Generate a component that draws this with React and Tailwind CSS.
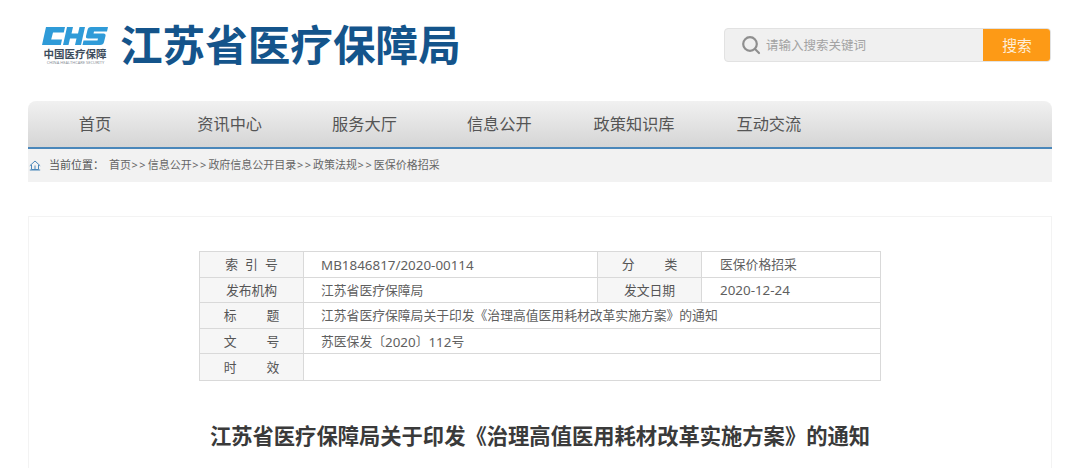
import React from "react";

const font = { fontFamily: '"Noto Sans","Noto Sans CJK SC",sans-serif' };

function Logo() {
  return (
    <div className="flex w-[66px] flex-col items-center">
      <svg width="66" height="18" viewBox="0 0 66 18" className="block">
        <g fill="#2f9bd8">
          <path d="M4 0H23L21.8 5.5H11L9.2 12.5H20L18.8 18H0Z" />
          <path d="M25 0H31L29.5 6.5H36L37.5 0H43L39 18H33L34.5 11.5H28L26.5 18H21Z" />
          <path d="M47 0H66L65 4.5H52L51.5 6.5H61.5Q64 6.5 63.5 9L62 15Q61.5 18 58 18H40.5L41.5 13.5H55.5L56 11.5H46Q43.5 11.5 44 9L45.5 3Q46 0 49 0Z" />
        </g>
      </svg>
      <div className="mt-[3px] text-[10.5px] leading-[12px] font-bold whitespace-nowrap text-[#3d4c5c]">中国医疗保障</div>
      <div className="origin-top scale-50 text-[8px] leading-[8px] whitespace-nowrap text-[#8a929a]">CHINA HEALTHCARE SECURITY</div>
    </div>
  );
}

const labelCls = "flex items-center justify-center bg-[#f6f6f6] border-r border-[#d9d9d9] pt-px text-[12.8px] text-[#555]";
const valueCls = "flex items-center pl-[17px] pt-px text-[12.8px] text-[#5f5f5f] whitespace-nowrap";
const latinCls = "text-[13.4px]";

function Row({ children, last }) {
  return (
    <div className={"flex h-[25.6px] " + (last ? "" : "border-b border-[#d9d9d9]")}>{children}</div>
  );
}

function Sep() {
  return <span className="w-[16.7px] text-center tracking-[1.5px]">&gt;&gt;</span>;
}

export default function App() {
  const nav = ["首页", "资讯中心", "服务大厅", "信息公开", "政策知识库", "互动交流"];
  return (
    <div style={font} className="h-[468px] w-[1080px] overflow-hidden bg-white">
      <header className="flex h-[101px] items-start pr-[29px] pl-[42px]">
        <div className="mt-[27px]"><Logo /></div>
        <h1 className="mt-[13px] ml-[12px] text-[42.6px] leading-[62px] font-bold whitespace-nowrap text-[#14548b]">江苏省医疗保障局</h1>
        <div className="mt-[28px] ml-auto flex h-[34px] w-[327px] overflow-hidden rounded-[4px] border border-[#e2e2e2] bg-[#f0f0f0]">
          <div className="flex flex-1 items-center pl-[16px]">
            <svg width="20" height="20" viewBox="0 0 20 20" fill="none" stroke="#8f8f8f" strokeWidth="2.2" strokeLinecap="round">
              <circle cx="9" cy="9" r="6.8" />
              <path d="M14 14l4 4" />
            </svg>
            <span className="ml-[5px] pt-[2px] text-[12.5px] text-[#a3a3a3]">请输入搜索关键词</span>
          </div>
          <div className="-my-px -mr-px flex w-[68px] items-center justify-center bg-[#fd9a16] text-[14.8px] text-[#fdeeda]">搜索</div>
        </div>
      </header>

      <nav className="mx-[28px] flex h-[48px] items-center rounded-t-[8px] border-b-2 border-[#4a87ba] bg-gradient-to-b from-[#f1f1f1] to-[#d5d5d5]">
        {nav.map((n) => (
          <div key={n} className="w-[134.8px] pr-px text-center text-[16.2px] whitespace-nowrap text-[#555]">{n}</div>
        ))}
      </nav>

      <div className="mx-[28px] flex h-[33px] items-center bg-[#f2f2f2] text-[11px] whitespace-nowrap text-[#555]">
        <svg width="12" height="11" viewBox="0 0 12 11" fill="none" stroke="#4a87ba" strokeWidth="1" className="mr-[8px] ml-[1px]">
          <path d="M.8 5.8 6 1l5.2 4.8M2.5 5v4.5h7V5M6 5.5v4M.8 10h10.4" />
        </svg>
        <span className="w-[60px]">当前位置：</span>
        <div className="flex text-[#666]">
          <span>首页</span><Sep /><span>信息公开</span><Sep /><span>政府信息公开目录</span><Sep /><span>政策法规</span><Sep /><span>医保价格招采</span>
        </div>
      </div>

      <main className="mx-[28px] mt-[34px] h-[300px] border border-[#f3f3f3] pt-[34px]">
        <div className="ml-[170px] w-[682px] border border-[#d9d9d9]">
          <Row>
            <div className={labelCls + " w-[104px] gap-[7px]"}><span>索</span><span>引</span><span>号</span></div>
            <div className={valueCls + " w-[293px]"}><span className={latinCls}>MB1846817/2020-00114</span></div>
            <div className={labelCls + " w-[105px] gap-[30px] border-l"}><span>分</span><span>类</span></div>
            <div className={valueCls + " flex-1 pl-[18px]"}>医保价格招采</div>
          </Row>
          <Row>
            <div className={labelCls + " w-[104px]"}>发布机构</div>
            <div className={valueCls + " w-[293px]"}>江苏省医疗保障局</div>
            <div className={labelCls + " w-[105px] border-l"}>发文日期</div>
            <div className={valueCls + " flex-1 pl-[18px]"}><span className={latinCls}>2020-12-24</span></div>
          </Row>
          <Row>
            <div className={labelCls + " w-[104px] gap-[30px]"}><span>标</span><span>题</span></div>
            <div className={valueCls + " flex-1"}>江苏省医疗保障局关于印发《治理高值医用耗材改革实施方案》的通知</div>
          </Row>
          <Row>
            <div className={labelCls + " w-[104px] gap-[30px]"}><span>文</span><span>号</span></div>
            <div className={valueCls + " flex-1"}>苏医保发〔<span className={latinCls}>2020</span>〕<span className={latinCls}>112</span>号</div>
          </Row>
          <Row last>
            <div className={labelCls + " w-[104px] gap-[30px]"}><span>时</span><span>效</span></div>
            <div className={valueCls + " flex-1"}></div>
          </Row>
        </div>
        <h2 className="mt-[39px] text-center text-[21.3px] leading-[32px] font-bold whitespace-nowrap text-[#3a3a3a]">
          江苏省医疗保障局关于印发《治理高值医用耗材改革实施方案》的通知
        </h2>
      </main>
    </div>
  );
}
